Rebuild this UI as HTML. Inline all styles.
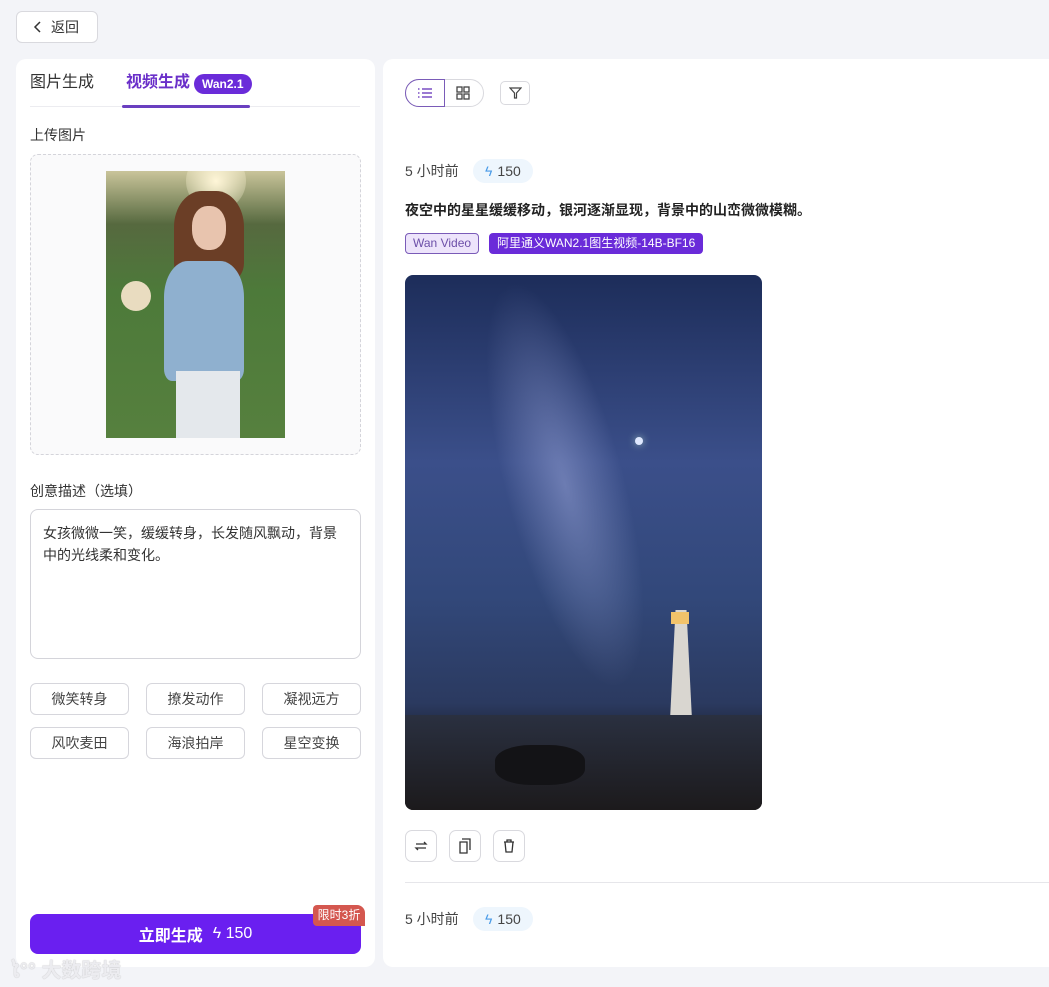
<!DOCTYPE html>
<html><head><meta charset="utf-8">
<style>
*{box-sizing:border-box;margin:0;padding:0}
body{width:1049px;height:987px;background:#f3f4f8;font-family:"Liberation Sans","Noto Sans CJK SC",sans-serif;position:relative;overflow:hidden;color:#333}
.abs{position:absolute}
.back{left:16px;top:11px;width:82px;height:32px;background:#fff;border:1px solid #d9d9de;border-radius:6px;font-size:14px;color:#333;display:flex;align-items:center;padding-left:16px;gap:8px}
.panel{background:#fff;border-radius:10px}
.chip{border:1px solid #d6d6dc;border-radius:6px;background:#fff;font-size:14px;color:#444;display:flex;align-items:center;justify-content:center;width:99px;height:32px}
.ib{width:32px;height:32px;border:1px solid #d9d9de;border-radius:7px;background:#fff;display:flex;align-items:center;justify-content:center}
.bolt{background:#eef6fd;border-radius:12px;height:24px;display:flex;align-items:center;padding:0 12px;font-size:14px;color:#444;gap:5px}
</style></head><body>
<div class="abs back"><svg width="10" height="12" viewBox="0 0 10 12"><path d="M7 1L2 6l5 5" stroke="#333" stroke-width="1.5" fill="none"/></svg>返回</div>

<div class="abs panel" style="left:16px;top:59px;width:359px;height:908px"></div>
<div class="abs" style="left:30px;top:72px;font-size:16px;line-height:22px;color:#333">图片生成</div>
<div class="abs" style="left:126px;top:72px;font-size:16px;line-height:22px;color:#6a2fc9;font-weight:bold">视频生成</div>
<div class="abs" style="left:194px;top:74px;height:20px;padding:0 8px;background:#6a2bd9;color:#fff;border-radius:10px;font-size:12px;font-weight:bold;line-height:20px">Wan2.1</div>
<div class="abs" style="left:30px;top:106px;width:330px;height:1px;background:#ececf0"></div>
<div class="abs" style="left:122px;top:105px;width:128px;height:3px;background:#6a3fc0;border-radius:2px"></div>
<div class="abs" style="left:30px;top:125px;font-size:14px;line-height:20px;color:#333">上传图片</div>
<div class="abs" style="left:30px;top:154px;width:331px;height:301px;border:1px dashed #d4d4da;border-radius:8px;background:#fafafb"></div>
<div class="abs" style="left:106px;top:171px;width:179px;height:267px;background:linear-gradient(180deg,#c9c49a 0%,#56693f 20%,#4d7a3a 45%,#56803e 100%);overflow:hidden">
 <div class="abs" style="left:80px;top:-20px;width:60px;height:60px;border-radius:50%;background:radial-gradient(#fff6d8,rgba(255,240,200,0))"></div>
 <div class="abs" style="left:68px;top:20px;width:70px;height:90px;border-radius:40% 40% 20% 20%;background:#6b3e26"></div>
 <div class="abs" style="left:86px;top:35px;width:34px;height:44px;border-radius:45%;background:#e8c4ae"></div>
 <div class="abs" style="left:58px;top:90px;width:80px;height:120px;border-radius:30% 30% 10% 10%;background:#8fb0cf"></div>
 <div class="abs" style="left:70px;top:200px;width:64px;height:70px;background:#e4e8ec"></div>
 <div class="abs" style="left:15px;top:110px;width:30px;height:30px;border-radius:50%;background:#e9dcc0"></div>
</div>
<div class="abs" style="left:30px;top:481px;font-size:14px;line-height:20px;color:#333">创意描述（选填）</div>
<div class="abs" style="left:30px;top:509px;width:331px;height:150px;border:1px solid #d4d4da;border-radius:8px;padding:12px;font-size:14px;line-height:22px;color:#333">女孩微微一笑，缓缓转身，长发随风飘动，背景中的光线柔和变化。</div>
<div class="abs chip" style="left:30px;top:683px">微笑转身</div>
<div class="abs chip" style="left:146px;top:683px">撩发动作</div>
<div class="abs chip" style="left:262px;top:683px">凝视远方</div>
<div class="abs chip" style="left:30px;top:727px">风吹麦田</div>
<div class="abs chip" style="left:146px;top:727px">海浪拍岸</div>
<div class="abs chip" style="left:262px;top:727px">星空变换</div>
<div class="abs" style="left:30px;top:914px;width:331px;height:40px;background:#6a1ff0;border-radius:8px;color:#fff;font-size:16px;display:flex;align-items:center;justify-content:center;gap:10px"><b>立即生成</b><span>ϟ 150</span></div>
<div class="abs" style="left:313px;top:905px;width:52px;height:21px;background:#d4574f;color:#fff;font-size:12px;border-radius:4px 8px 0 4px;text-align:center;line-height:21px">限时3折</div>
<div class="abs" style="left:10px;top:954px;font-size:20px;color:#ececf0;font-weight:bold;text-shadow:0 0 1px #aaa">ໄ°° 大数跨境</div>

<div class="abs panel" style="left:383px;top:59px;width:680px;height:908px"></div>
<div class="abs" style="left:405px;top:79px;width:79px;height:28px;border:1px solid #d9d9de;border-radius:14px"></div>
<div class="abs" style="left:405px;top:79px;width:40px;height:28px;border:1px solid #7a5bb8;border-radius:14px 0 0 14px;display:flex;align-items:center;justify-content:center"><svg width="16" height="12"><g stroke="#7a4fc4" stroke-width="1.4"><path d="M5 2h10M5 6h10M5 10h10M1 2h1.5M1 6h1.5M1 10h1.5"/></g></svg></div>
<div class="abs" style="left:456px;top:86px"><svg width="14" height="14"><g fill="none" stroke="#444" stroke-width="1.3"><rect x="1" y="1" width="5" height="5"/><rect x="8" y="1" width="5" height="5"/><rect x="1" y="8" width="5" height="5"/><rect x="8" y="8" width="5" height="5"/></g></svg></div>
<div class="abs ib" style="left:500px;top:81px;width:30px;height:24px;border-radius:5px"><svg width="13" height="12"><path d="M1 1h11L7.5 6v5h-2V6z" fill="none" stroke="#444" stroke-width="1.2"/></svg></div>
<div class="abs" style="left:405px;top:161px;font-size:14px;line-height:20px;color:#444">5 小时前</div>
<div class="abs bolt" style="left:473px;top:159px"><span style="color:#4a9be8">ϟ</span>150</div>
<div class="abs" style="left:405px;top:200px;font-size:14px;line-height:20px;color:#222;font-weight:bold">夜空中的星星缓缓移动，银河逐渐显现，背景中的山峦微微模糊。</div>
<div class="abs" style="left:405px;top:233px;height:21px;padding:0 7px;border:1px solid #7a5bb8;background:#ede4fb;color:#6c4fa8;border-radius:4px;font-size:12px;line-height:19px">Wan Video</div>
<div class="abs" style="left:489px;top:233px;height:21px;padding:0 8px;background:#6a2bd9;color:#fff;border-radius:4px;font-size:12px;line-height:21px">阿里通义WAN2.1图生视频-14B-BF16</div>
<div class="abs" style="left:405px;top:275px;width:357px;height:535px;border-radius:8px;overflow:hidden;background:linear-gradient(180deg,#1d2d5a 0%,#3b4f8a 35%,#32487a 60%,#2b3a60 80%,#1a1f2e 88%,#2a2525 100%)">
 <div class="abs" style="left:100px;top:0;width:120px;height:420px;background:radial-gradient(ellipse,rgba(170,180,230,.45),rgba(0,0,0,0) 70%);transform:rotate(-15deg)"></div>
 <div class="abs" style="left:230px;top:162px;width:8px;height:8px;border-radius:50%;background:#dfe8ff;box-shadow:0 0 8px #9bb"></div>
 <div class="abs" style="left:265px;top:335px;width:22px;height:110px;background:#d9d6d0;clip-path:polygon(25% 0,75% 0,100% 100%,0 100%)"></div>
 <div class="abs" style="left:266px;top:337px;width:18px;height:12px;background:#f2c36a"></div>
 <div class="abs" style="left:0;top:440px;width:357px;height:95px;background:linear-gradient(180deg,#2a3040,#1c1a1c)"></div>
 <div class="abs" style="left:90px;top:470px;width:90px;height:40px;border-radius:40%;background:#131316"></div>
</div>
<div class="abs ib" style="left:405px;top:830px"><svg width="14" height="12"><path d="M2 4h10l-2-2M12 8H2l2 2" fill="none" stroke="#333" stroke-width="1.3"/></svg></div>
<div class="abs ib" style="left:449px;top:830px"><svg width="12" height="16"><path d="M3 1h8v11M1 4h7v11H1z" fill="none" stroke="#333" stroke-width="1.3"/></svg></div>
<div class="abs ib" style="left:493px;top:830px"><svg width="12" height="14"><path d="M1 3h10M4 3V1h4v2M2 3l1 10h6l1-10" fill="none" stroke="#333" stroke-width="1.3"/></svg></div>
<div class="abs" style="left:405px;top:882px;width:644px;height:1px;background:#e6e6ea"></div>
<div class="abs" style="left:405px;top:909px;font-size:14px;line-height:20px;color:#444">5 小时前</div>
<div class="abs bolt" style="left:473px;top:907px"><span style="color:#4a9be8">ϟ</span>150</div>
</body></html>
